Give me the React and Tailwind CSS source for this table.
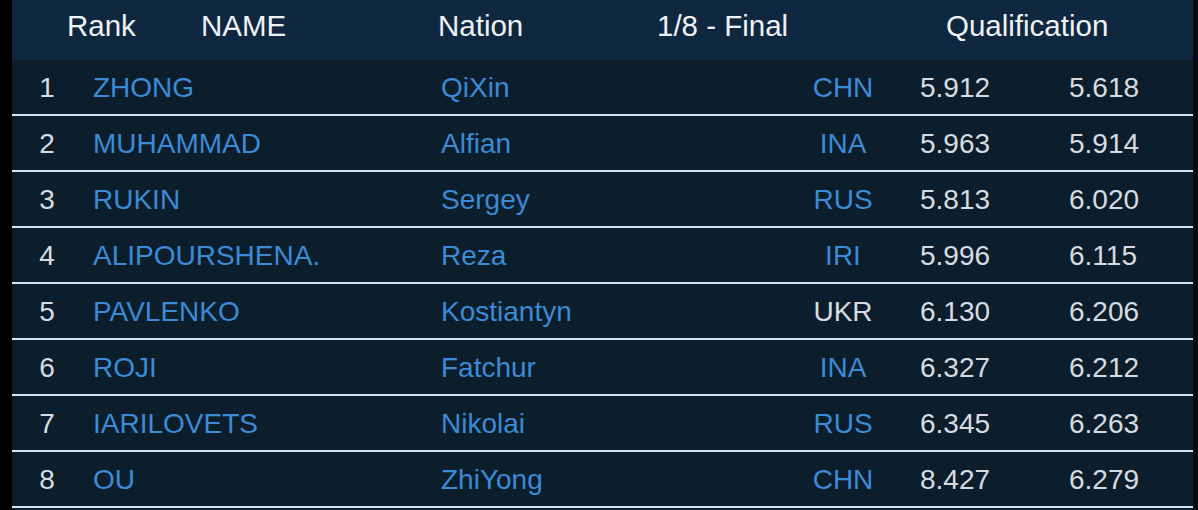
import React from "react";

const rows = [
  ["1", "ZHONG", "QiXin", "CHN", "5.912", "5.618", true],
  ["2", "MUHAMMAD", "Alfian", "INA", "5.963", "5.914", true],
  ["3", "RUKIN", "Sergey", "RUS", "5.813", "6.020", true],
  ["4", "ALIPOURSHENA.", "Reza", "IRI", "5.996", "6.115", true],
  ["5", "PAVLENKO", "Kostiantyn", "UKR", "6.130", "6.206", false],
  ["6", "ROJI", "Fatchur", "INA", "6.327", "6.212", true],
  ["7", "IARILOVETS", "Nikolai", "RUS", "6.345", "6.263", true],
  ["8", "OU", "ZhiYong", "CHN", "8.427", "6.279", true],
];

export default function App() {
  return (
    <div
      className="flex w-[1198px] h-[510px] bg-black overflow-hidden"
      style={{ fontFamily: '"Liberation Sans", Arial, sans-serif' }}
    >
      <div className="w-[12px] shrink-0 bg-black" />
      <div className="flex-1 flex flex-col bg-[#0c1d2b]">
        <div className="h-[60px] shrink-0 flex items-center pb-[7px] bg-[#0f2840] text-[29.5px] text-[#eef2f5]">
          <div className="w-[55px] shrink-0" />
          <div className="w-[134px] shrink-0">Rank</div>
          <div className="w-[237px] shrink-0">NAME</div>
          <div className="w-[219px] shrink-0">Nation</div>
          <div className="w-[289px] shrink-0">1/8 - Final</div>
          <div>Qualification</div>
        </div>
        {rows.map(([rank, last, first, nat, q1, q2, blue]) => (
          <div
            key={rank}
            className="h-[56px] shrink-0 flex items-center pt-[1px] border-b-2 border-[#dde6ec] text-[28px]"
          >
            <div className="w-[70px] shrink-0 text-center text-[#d6dce1]">{rank}</div>
            <div className="w-[359px] shrink-0 pl-[11px] text-[#3b8bd6]">{last}</div>
            <div className="w-[337px] shrink-0 text-[#3b8bd6]">{first}</div>
            <div
              className={
                "w-[130px] shrink-0 text-center " +
                (blue ? "text-[#3b8bd6]" : "text-[#d6dce1]")
              }
            >
              {nat}
            </div>
            <div className="w-[161px] shrink-0 pl-[12px] text-[#d6dce1]">{q1}</div>
            <div className="text-[#d6dce1]">{q2}</div>
          </div>
        ))}
      </div>
      <div className="w-[5px] shrink-0 bg-[#050b10]" />
    </div>
  );
}
